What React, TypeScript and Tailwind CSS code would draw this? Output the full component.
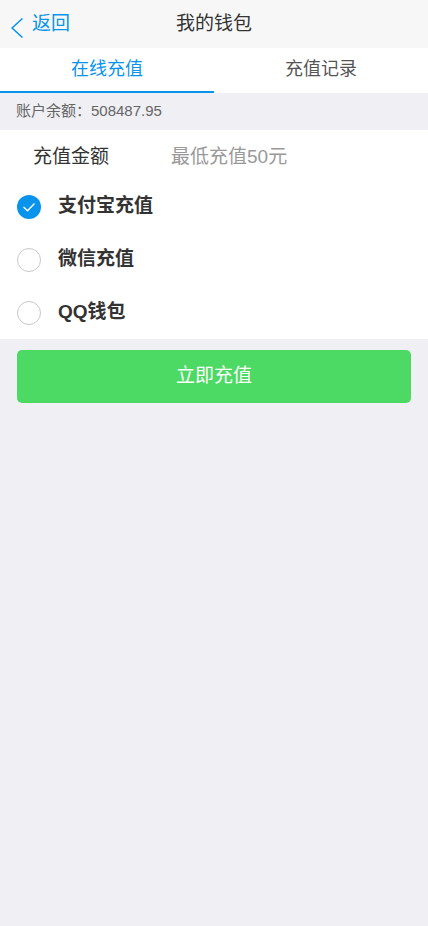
import { useState } from "react";

const methods = ["支付宝充值", "微信充值", "QQ钱包"];

export default function App() {
  const [tab, setTab] = useState(0);
  const [method, setMethod] = useState(0);

  return (
    <div
      className="min-h-[926px] bg-[#efeff4] text-[#333]"
      style={{ fontFamily: '"Liberation Sans", "Noto Sans CJK SC", sans-serif' }}
    >
      <header className="relative h-12 bg-[#f7f7f7] flex items-center justify-center">
        <button className="absolute left-0 top-0 h-12 flex items-center pl-[10px] text-[#0894ec] text-[19px]">
          <svg width="14" height="22" viewBox="0 0 14 22" fill="none" className="mt-[8px]">
            <path d="M12.5 1.5L2 11l10.5 9.5" stroke="currentColor" strokeWidth="1.6" strokeLinejoin="round" />
          </svg>
          <span className="ml-[8px]">返回</span>
        </button>
        <h1 className="text-[19px] font-normal">我的钱包</h1>
      </header>

      <div className="flex bg-white h-[45px]">
        {["在线充值", "充值记录"].map((t, i) => (
          <button
            key={t}
            onClick={() => setTab(i)}
            className={`flex-1 flex items-center justify-center text-[18px] border-b-2 ${
              tab === i ? "text-[#0894ec] border-[#0894ec]" : "text-[#555] border-transparent"
            }`}
          >
            {t}
          </button>
        ))}
      </div>

      <div className="h-[37px] flex items-center px-4 text-[15px] text-[#666]">账户余额：508487.95</div>

      <div className="bg-white">
        <div className="h-[50px] flex items-center pt-[4px]">
          <span className="w-[171px] pl-[33px] text-[19px] shrink-0">充值金额</span>
          <input
            className="flex-1 min-w-0 outline-none text-[19px] placeholder:text-[#999] bg-transparent"
            placeholder="最低充值50元"
          />
        </div>
        {methods.map((m, i) => (
          <button
            key={m}
            onClick={() => setMethod(i)}
            className="w-full h-[53px] flex items-center pl-[17px] text-left"
          >
            {method === i ? (
              <span className="w-6 h-6 rounded-full bg-[#0894ec] flex items-center justify-center">
                <svg width="14" height="10" viewBox="0 0 14 10" fill="none">
                  <path d="M1.5 5l4 3.8L12.5 1.5" stroke="white" strokeWidth="1.4" />
                </svg>
              </span>
            ) : (
              <span className="w-6 h-6 rounded-full border border-[#c8c7cc]" />
            )}
            <span className="ml-[17px] text-[19px] font-bold text-[#333]">{m}</span>
          </button>
        ))}
      </div>

      <div className="px-[17px] pt-[11px]">
        <button className="w-full h-[53px] rounded-[5px] bg-[#4cd964] text-white text-[19px]">立即充值</button>
      </div>
    </div>
  );
}
